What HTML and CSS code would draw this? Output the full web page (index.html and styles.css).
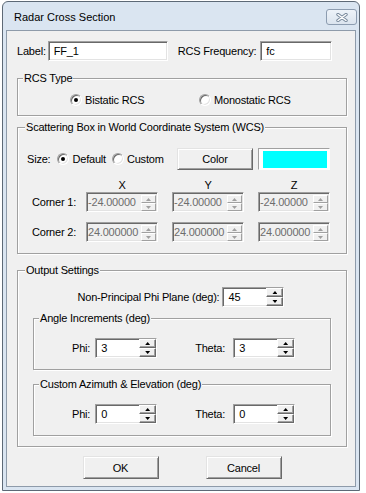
FILE: index.html
```html
<!DOCTYPE html>
<html lang="en">
<head>
  <meta charset="UTF-8">
  <meta name="viewport" content="width=device-width, initial-scale=1.0">
  <title>Radar Cross Section</title>
  <link rel="stylesheet" href="styles.css">
</head>
<body>
  <div class="window">
    <div class="titlebar">
      <div class="title">Radar Cross Section</div>
      <div class="close-btn">
        <svg width="12" height="9" viewBox="0 0 12 9">
          <path d="M2 1.5 L10 7.5 M10 1.5 L2 7.5" stroke="#77889b" stroke-width="3.4" stroke-linecap="round"/>
          <path d="M2 1.5 L10 7.5 M10 1.5 L2 7.5" stroke="#ffffff" stroke-width="1.5" stroke-linecap="round"/>
        </svg>
      </div>
    </div>

    <div class="client">
      <div class="top-row">
        <span>Label:</span>
        <input class="field label-field" type="text" value="FF_1">
        <span class="freq-lbl">RCS Frequency:</span>
        <input class="field freq-field" type="text" value="fc">
      </div>

      <div class="group rcs-type">
        <div class="group-title">RCS Type</div>
        <div class="radio-row">
          <label class="radio bistatic"><span class="dot checked"></span>Bistatic RCS</label>
          <label class="radio"><span class="dot"></span>Monostatic RCS</label>
        </div>
      </div>

      <div class="group scatter">
        <div class="group-title wide-title">Scattering Box in World Coordinate System (WCS)</div>
        <div class="size-row">
          <span>Size:</span>
          <label class="radio size-default"><span class="dot checked"></span>Default</label>
          <label class="radio size-custom"><span class="dot"></span>Custom</label>
          <button class="btn color-btn">Color</button>
          <div class="swatch"><div class="swatch-fill"></div></div>
        </div>
        <div class="corner-row heads">
          <span class="corner-lbl"></span>
          <span class="col-head">X</span>
          <span class="col-head">Y</span>
          <span class="col-head">Z</span>
        </div>
        <div class="corner-row">
          <span class="corner-lbl">Corner 1:</span>
          <div class="spin disabled corner"><input type="text" value="-24.00000" disabled><div class="arrows"><span class="up"></span><span class="down"></span></div></div>
          <div class="spin disabled corner"><input type="text" value="-24.00000" disabled><div class="arrows"><span class="up"></span><span class="down"></span></div></div>
          <div class="spin disabled corner"><input type="text" value="-24.00000" disabled><div class="arrows"><span class="up"></span><span class="down"></span></div></div>
        </div>
        <div class="corner-row second">
          <span class="corner-lbl">Corner 2:</span>
          <div class="spin disabled corner"><input type="text" value="24.000000" disabled><div class="arrows"><span class="up"></span><span class="down"></span></div></div>
          <div class="spin disabled corner"><input type="text" value="24.000000" disabled><div class="arrows"><span class="up"></span><span class="down"></span></div></div>
          <div class="spin disabled corner"><input type="text" value="24.000000" disabled><div class="arrows"><span class="up"></span><span class="down"></span></div></div>
        </div>
      </div>

      <div class="group output">
        <div class="group-title wide-title">Output Settings</div>
        <div class="phi-plane-row">
          <span>Non-Principal Phi Plane (deg):</span>
          <div class="spin"><input type="text" value="45"><div class="arrows"><span class="up"></span><span class="down"></span></div></div>
        </div>

        <div class="group inner increments">
          <div class="group-title">Angle Increments (deg)</div>
          <div class="pair-row">
            <div class="pair"><span>Phi:</span><div class="spin"><input type="text" value="3"><div class="arrows"><span class="up"></span><span class="down"></span></div></div></div>
            <div class="pair theta"><span>Theta:</span><div class="spin"><input type="text" value="3"><div class="arrows"><span class="up"></span><span class="down"></span></div></div></div>
          </div>
        </div>

        <div class="group inner custom">
          <div class="group-title">Custom Azimuth &amp; Elevation (deg)</div>
          <div class="pair-row">
            <div class="pair"><span>Phi:</span><div class="spin"><input type="text" value="0"><div class="arrows"><span class="up"></span><span class="down"></span></div></div></div>
            <div class="pair theta"><span>Theta:</span><div class="spin"><input type="text" value="0"><div class="arrows"><span class="up"></span><span class="down"></span></div></div></div>
          </div>
        </div>
      </div>

      <div class="button-row">
        <button class="btn">OK</button>
        <button class="btn">Cancel</button>
      </div>
    </div>
  </div>
</body>
</html>
```

FILE: styles.css
```css
* {
  box-sizing: border-box;
}
body {
  margin: 0;
  background: #ffffff;
  font-family: "Liberation Sans", Arial, sans-serif;
  font-size: 11px;
  color: #000000;
}
.window {
  margin: 1px 0 0 2px;
  width: 358px;
  height: 490px;
  border: 1px solid #5d6976;
  border-radius: 6px 6px 0 0;
  background: #dae5f1;
  padding: 0 3px 3px 3px;
  display: flex;
  flex-direction: column;
}
.titlebar {
  height: 28px;
  display: flex;
  justify-content: space-between;
  align-items: flex-start;
}
.title {
  padding: 2px 0 0 8px;
  line-height: 27px;
  font-size: 11px;
}
.close-btn {
  width: 31px;
  height: 16px;
  margin: 7px -1px 0 0;
  border: 1px solid #8c9cb0;
  border-radius: 3px;
  background: linear-gradient(#eef3f9, #dbe4ee);
  display: flex;
  align-items: center;
  justify-content: center;
}
.client {
  flex: 1;
  border: 1px solid #8e9baa;
  background: #f0f0f0;
  padding: 0 8px 0 10px;
  letter-spacing: -0.2px;
}

/* text boxes */
.field {
  height: 20px;
  border: 1px solid;
  border-color: #a0a0a0 #ffffff #ffffff #a0a0a0;
  box-shadow: inset 1px 1px 0 #696969, inset -1px -1px 0 #e3e3e3;
  background: #ffffff;
  font: inherit;
  letter-spacing: inherit;
  padding: 0 0 0 5px;
  outline: none;
}
.top-row {
  margin-top: 10px;
  height: 20px;
  display: flex;
  align-items: center;
}
.label-field {
  width: 120px;
  margin-left: 2px;
}
.freq-lbl {
  margin-left: 10px;
}
.freq-field {
  width: 72px;
  margin-left: 4px;
}

/* group boxes */
.group {
  position: relative;
  border: 1px solid #a0a0a0;
  box-shadow: 1px 1px 0 #ffffff, inset 1px 1px 0 #ffffff;
}
.group-title {
  position: absolute;
  left: 5px;
  top: -7px;
  padding: 0 1px;
  line-height: 13px;
  background: #f0f0f0;
}
.wide-title {
  left: 7px;
}
.rcs-type {
  margin-top: 17px;
  height: 38px;
  padding: 14px 0 0 52px;
}
.scatter {
  margin-top: 11px;
  height: 127px;
  padding: 20px 16px 0 0;
}
.output {
  margin-top: 16px;
  height: 177px;
  padding-top: 16px;
}
.inner {
  margin: 0 15px;
  height: 52px;
  padding-top: 19px;
}
.increments {
  margin-top: 11px;
}
.custom {
  margin-top: 14px;
}

/* radio buttons */
.radio {
  display: flex;
  align-items: center;
  gap: 3px;
  height: 13px;
}
.dot {
  position: relative;
  width: 12px;
  height: 12px;
  border-radius: 50%;
  border: 1px solid;
  border-color: #a0a0a0 #ffffff #ffffff #a0a0a0;
  box-shadow: inset 1px 1px 0 #696969, inset -1px -1px 0 #e3e3e3;
  background: #ffffff;
}
.dot.checked::after {
  content: "";
  position: absolute;
  left: 3px;
  top: 3px;
  width: 4px;
  height: 4px;
  border-radius: 50%;
  background: #000000;
}
.radio-row {
  display: flex;
}
.bistatic {
  width: 129px;
}

/* size row */
.size-row {
  display: flex;
  align-items: center;
  height: 22px;
  padding-left: 9px;
}
.size-default {
  margin-left: 7px;
}
.size-custom {
  margin-left: 6px;
}
.btn {
  width: 76px;
  height: 23px;
  background: #f0f0f0;
  border: 1px solid;
  border-color: #e3e3e3 #696969 #696969 #e3e3e3;
  box-shadow: inset 1px 1px 0 #ffffff, inset -1px -1px 0 #a0a0a0;
  font: inherit;
  letter-spacing: inherit;
  color: #000000;
  padding: 0;
}
.color-btn {
  height: 22px;
  margin-left: auto;
}
.swatch {
  width: 72px;
  height: 22px;
  margin-left: 5px;
  border: 1px solid;
  border-color: #a0a0a0 #ffffff #ffffff #a0a0a0;
  background: #ffffff;
  padding: 2px 2px 1px 4px;
}
.swatch-fill {
  height: 100%;
  background: #00ffff;
}

/* corners */
.corner-row {
  display: flex;
  align-items: center;
  gap: 14px;
  height: 20px;
}
.corner-row.heads {
  margin-top: 8px;
  height: 14px;
}
.corner-row.second {
  margin-top: 10px;
}
.corner-lbl {
  width: 54px;
  padding-left: 14px;
  white-space: nowrap;
}
.col-head {
  width: 72px;
  text-align: center;
}

/* spin boxes */
.spin {
  display: flex;
  width: 62px;
  height: 20px;
  border: 1px solid;
  border-color: #a0a0a0 #ffffff #ffffff #a0a0a0;
  box-shadow: inset 1px 1px 0 #696969, inset -1px -1px 0 #e3e3e3;
  background: #ffffff;
}
.spin input {
  flex: 1;
  min-width: 0;
  border: none;
  background: transparent;
  font: inherit;
  letter-spacing: inherit;
  color: #000000;
  padding: 0 0 0 5px;
  outline: none;
}
.arrows {
  width: 17px;
  display: flex;
  flex-direction: column;
}
.arrows span {
  position: relative;
  flex: 1;
  background: #f0f0f0;
  border: 1px solid;
  border-color: #ffffff #696969 #696969 #ffffff;
  box-shadow: inset -1px -1px 0 #a0a0a0;
}
.arrows span::after {
  content: "";
  position: absolute;
  left: 5px;
  top: 2px;
  width: 5px;
  height: 3px;
  background: #000000;
  clip-path: polygon(50% 0, 100% 100%, 0 100%);
}
.arrows .down::after {
  clip-path: polygon(0 0, 100% 0, 50% 100%);
}
.spin.corner {
  width: 72px;
}
.spin.disabled {
  background: #f0f0f0;
}
.spin.disabled input {
  color: #6d6d6d;
  padding-left: 1px;
}
.spin.disabled .arrows {
  width: 15px;
  margin: 2px 1px 0 0;
}
.spin.disabled .arrows span {
  border-color: #ffffff #a0a0a0 #a0a0a0 #ffffff;
  box-shadow: none;
}
.spin.disabled .arrows span::after {
  left: 4px;
  background: #a0a0a0;
}

/* output settings */
.phi-plane-row {
  display: flex;
  justify-content: center;
  align-items: center;
  gap: 3px;
  height: 20px;
  margin-right: 2px;
}
.pair-row {
  display: flex;
  gap: 38px;
  padding-left: 38px;
}
.pair {
  display: flex;
  align-items: center;
  gap: 5px;
}
.pair.theta {
  gap: 8px;
}

.button-row {
  margin-top: 9px;
  display: flex;
  justify-content: center;
  gap: 47px;
}
```
